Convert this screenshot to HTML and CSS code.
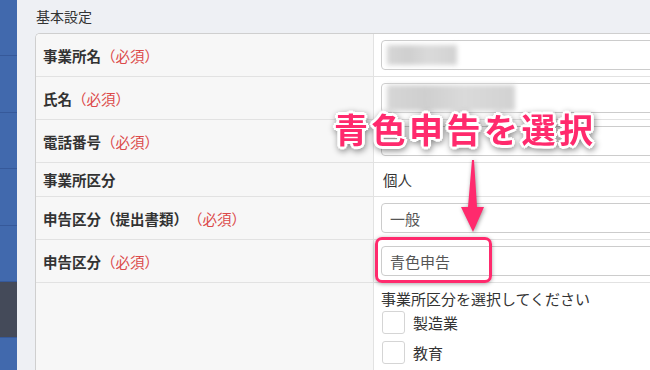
FILE: index.html
```html
<!DOCTYPE html>
<html lang="ja">
<head>
    <meta charset="UTF-8">
    <meta name="viewport" content="width=device-width, initial-scale=1.0">
    <title>基本設定</title>
    <link rel="stylesheet" href="styles.css">
</head>
<body>
    <div class="layout">
        <nav class="sidebar">
            <a href="#" class="nav-item"></a>
            <a href="#" class="nav-item"></a>
            <a href="#" class="nav-item"></a>
            <a href="#" class="nav-item"></a>
            <a href="#" class="nav-item"></a>
            <a href="#" class="nav-item active"></a>
            <a href="#" class="nav-item"></a>
        </nav>

        <main class="main">
            <h2 class="section-title">基本設定</h2>
            <div class="panel">
                <div class="row">
                    <div class="label">事業所名<span class="req">（必須）</span></div>
                    <div class="field">
                        <div class="input"><span class="blur blur-short"></span></div>
                    </div>
                </div>
                <div class="row">
                    <div class="label">氏名<span class="req">（必須）</span></div>
                    <div class="field">
                        <div class="input"><span class="blur blur-long"></span></div>
                    </div>
                </div>
                <div class="row">
                    <div class="label">電話番号<span class="req">（必須）</span></div>
                    <div class="field">
                        <div class="input"></div>
                    </div>
                </div>
                <div class="row row-small">
                    <div class="label">事業所区分</div>
                    <div class="field text">個人</div>
                </div>
                <div class="row">
                    <div class="label">申告区分（提出書類）<span class="req">（必須）</span></div>
                    <div class="field">
                        <div class="input">一般</div>
                    </div>
                </div>
                <div class="row">
                    <div class="label">申告区分<span class="req">（必須）</span></div>
                    <div class="field highlight-wrap">
                        <div class="input">青色申告</div>
                        <div class="highlight"></div>
                    </div>
                </div>
                <div class="row row-last">
                    <div class="label"></div>
                    <div class="field checks">
                        <p class="hint">事業所区分を選択してください</p>
                        <label class="check"><span class="box"></span>製造業</label>
                        <label class="check"><span class="box"></span>教育</label>
                    </div>
                </div>
            </div>
        </main>
    </div>

    <div class="callout">青色申告を選択</div>
    <svg class="arrow" width="40" height="85" viewBox="0 0 40 85">
        <path d="M17 5 L19 5 L22 52 L29 52 L18 77 L6 52 L13 52 Z" fill="#ff2a6d"/>
    </svg>
</body>
</html>
```

FILE: styles.css
```css
body {
    font-family: "Noto Sans CJK JP", "Noto Sans", sans-serif;
    background-color: #eef0f4;
    color: #333;
    margin: 0;
    width: 650px;
    height: 370px;
    overflow: hidden;
    position: relative;
}

.layout {
    display: flex;
    height: 370px;
}

.sidebar {
    width: 17px;
    flex-shrink: 0;
    background-color: #4169ad;
    display: flex;
    flex-direction: column;
    overflow: hidden;
}

.nav-item {
    display: block;
    flex-shrink: 0;
    height: 55.4px;
    border-bottom: 1px solid #36599a;
}

.nav-item.active {
    background-color: #444a59;
}

.main {
    flex: 1;
    overflow: hidden;
    padding: 6px 0 0 18px;
}

.section-title {
    margin: 0 0 7px 1px;
    font-size: 14px;
    font-weight: normal;
    line-height: 20px;
    color: #333;
}

.panel {
    width: 700px;
    background-color: #fff;
    border-top: 1px solid #cfcfcf;
    border-left: 1px solid #cfcfcf;
    border-top-left-radius: 5px;
    overflow: hidden;
}

.row {
    display: grid;
    grid-template-columns: 338px 1fr;
    min-height: 42px;
    border-bottom: 1px solid #e2e2e2;
}

.row-small {
    min-height: 33px;
}

.row-last {
    min-height: 90px;
    border-bottom: none;
}

.label {
    background-color: #f7f7f7;
    border-right: 1px solid #e2e2e2;
    font-size: 14.5px;
    font-weight: bold;
    display: flex;
    align-items: center;
    padding-left: 7px;
}

.req {
    color: #dc4a4a;
    font-weight: normal;
}

.field {
    display: flex;
    align-items: center;
    padding-left: 7px;
}

.field.text {
    font-size: 14.5px;
    padding-left: 9px;
}

.input {
    width: 100%;
    height: 30px;
    box-sizing: border-box;
    border: 1px solid #cccccc;
    border-radius: 4px;
    background-color: #fff;
    font-size: 15px;
    color: #555;
    display: flex;
    align-items: center;
    padding-left: 8px;
}

.blur {
    display: block;
    height: 20px;
    margin-left: -3px;
    background: linear-gradient(90deg, #d6d6d6, #cfcfcf 30%, #dadada 60%, #d2d2d2);
    filter: blur(2.5px);
}

.blur-short {
    width: 70px;
}

.blur-long {
    width: 128px;
    height: 26px;
}

.highlight-wrap {
    position: relative;
}

.highlight {
    position: absolute;
    left: 1px;
    top: -3px;
    width: 117px;
    height: 46px;
    box-sizing: border-box;
    border: 3px solid #ff2a6d;
    border-radius: 7px;
    box-shadow: 0 1px 4px rgba(0, 0, 0, 0.35);
}

.checks {
    flex-direction: column;
    align-items: flex-start;
    justify-content: flex-start;
    padding-top: 6px;
}

.hint {
    margin: 0 0 2px;
    font-size: 15px;
    line-height: 20px;
}

.check {
    display: flex;
    align-items: center;
    font-size: 15px;
    margin-bottom: 7px;
}

.box {
    width: 23px;
    height: 23px;
    box-sizing: border-box;
    border: 1px solid #d5d5d5;
    border-radius: 3px;
    background-color: #fff;
    margin: 0 8px 0 1px;
}

.callout {
    position: absolute;
    left: 334px;
    top: 111px;
    font-size: 34px;
    line-height: 36px;
    font-weight: bold;
    letter-spacing: 3.5px;
    color: #ff2a6d;
    white-space: nowrap;
    text-shadow:
        2px 0 0 #fff, -2px 0 0 #fff, 0 2px 0 #fff, 0 -2px 0 #fff,
        2px 2px 0 #fff, -2px 2px 0 #fff, 2px -2px 0 #fff, -2px -2px 0 #fff,
        3px 0 0 #fff, -3px 0 0 #fff, 0 3px 0 #fff, 0 -3px 0 #fff;
    filter: drop-shadow(1px 2px 3px rgba(0, 0, 0, 0.45));
}

.arrow {
    position: absolute;
    left: 455px;
    top: 155px;
    filter: drop-shadow(1px 1px 2px rgba(0, 0, 0, 0.4));
}
```
